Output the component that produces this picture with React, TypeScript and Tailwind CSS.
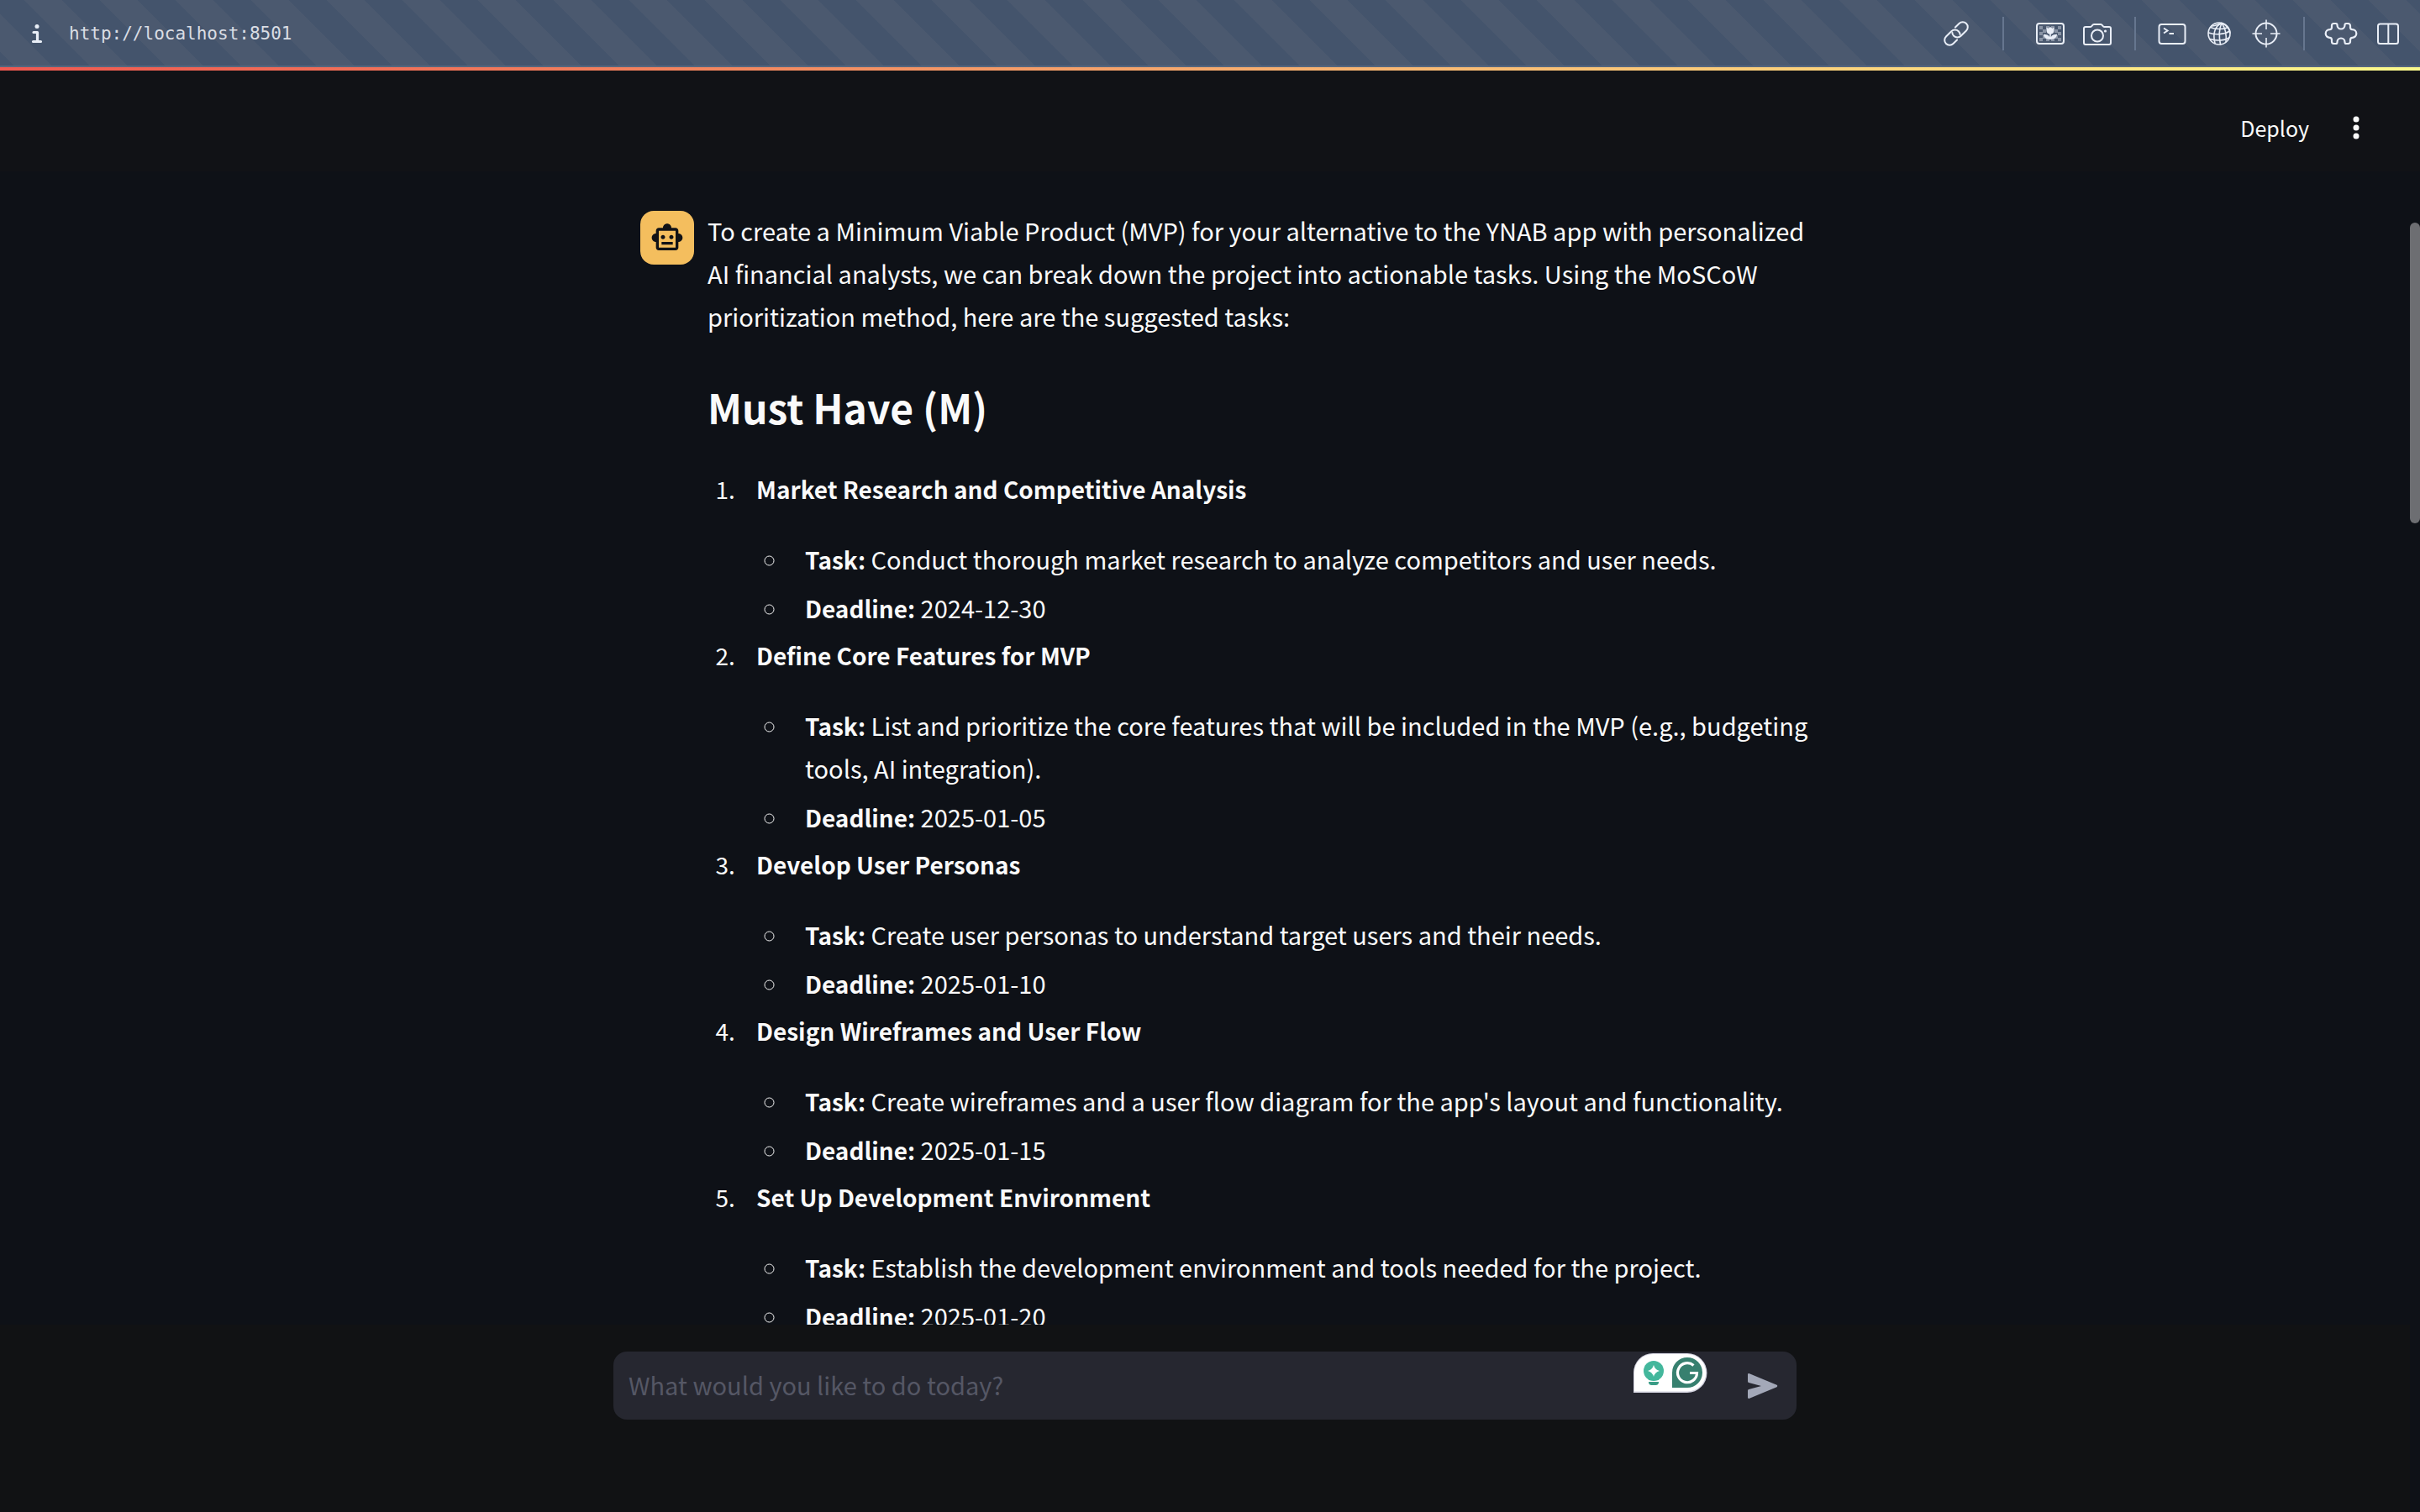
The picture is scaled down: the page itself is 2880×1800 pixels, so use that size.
import type { ReactNode } from "react";

const goals = [
  {
    title: "Market Research and Competitive Analysis",
    task: "Conduct thorough market research to analyze competitors and user needs.",
    deadline: "2024-12-30",
  },
  {
    title: "Define Core Features for MVP",
    task: "List and prioritize the core features that will be included in the MVP (e.g., budgeting tools, AI integration).",
    deadline: "2025-01-05",
  },
  {
    title: "Develop User Personas",
    task: "Create user personas to understand target users and their needs.",
    deadline: "2025-01-10",
  },
  {
    title: "Design Wireframes and User Flow",
    task: "Create wireframes and a user flow diagram for the app's layout and functionality.",
    deadline: "2025-01-15",
  },
  {
    title: "Set Up Development Environment",
    task: "Establish the development environment and tools needed for the project.",
    deadline: "2025-01-20",
  },
];

function BarButton({ label, children }: { label: string; children: ReactNode }) {
  return (
    <button type="button" aria-label={label} className="flex size-10 items-center justify-center">
      {children}
    </button>
  );
}

const stroke = {
  fill: "none",
  stroke: "currentColor",
  strokeWidth: 2,
  strokeLinecap: "round",
  strokeLinejoin: "round",
} as const;

function Divider() {
  return <div className="mr-[23px] ml-6 h-10 w-0.5 bg-[#66768f]" />;
}

function LinkIcon() {
  return (
    <svg viewBox="0 0 40 40" className="size-10" {...stroke}>
      <g transform="rotate(-45 20 20)">
        <path d="M15.500 26H9A6 6 0 0 1 9 14H18A6 6 0 0 1 24 20C24 21.500 23.500 23 22.500 24" />
        <path d="M24.500 14H31A6 6 0 0 1 31 26H22A6 6 0 0 1 16 20C16 18.500 16.500 17 17.500 16" />
      </g>
    </svg>
  );
}

function ImageIcon() {
  const cells: [number, number][] = [
    [7, 11], [15, 11], [21, 11], [29, 11], [11, 15], [25, 15], [7, 18], [29, 18],
    [11, 22], [25, 22], [7, 25], [15, 25], [21, 25], [29, 25],
  ];
  return (
    <svg viewBox="0 0 40 40" className="size-10" {...stroke}>
      <rect x="4" y="8" width="32" height="24" rx="3" />
      <g fill="currentColor" stroke="none" opacity="0.4">
        {cells.map(([x, y]) => (
          <rect key={`${x}-${y}`} x={x} y={y} width="4" height="4" />
        ))}
      </g>
      <g fill="currentColor" stroke="none">
        <path d="M15.5 12.5L17.5 14L20 12L22.5 14L24.5 12.5V16.5C24.5 19 22.5 20.5 20.8 20.8V24C22 22 24.5 20.8 28 20.8C28 24.5 25 27 20 27C15 27 12 24.5 12 20.8C15.5 20.8 18 22 19.2 24V20.8C17.5 20.5 15.5 19 15.5 16.5Z" />
      </g>
    </svg>
  );
}

function CameraIcon() {
  return (
    <svg viewBox="0 0 40 40" className="size-10" {...stroke}>
      <path d="M6 12H12C13.5 12 14 9 16 9H24C26 9 26.500 12 28 12H34A2 2 0 0 1 36 14V31A2 2 0 0 1 34 33H6A2 2 0 0 1 4 31V14A2 2 0 0 1 6 12Z" />
      <circle cx="20" cy="22.500" r="7" />
      <circle cx="29.500" cy="17" r="1.600" fill="currentColor" stroke="none" />
    </svg>
  );
}

function TerminalIcon() {
  return (
    <svg viewBox="0 0 40 40" className="size-10" {...stroke}>
      <rect x="4.500" y="9" width="31" height="23" rx="3" />
      <path d="M10 13.500L14.500 16.500L10 19.500M16.500 20H22" strokeLinecap="butt" strokeLinejoin="miter" />
    </svg>
  );
}

function GlobeIcon() {
  return (
    <svg viewBox="0 0 40 40" className="size-10" {...stroke} strokeWidth={1.6}>
      <circle cx="20" cy="20" r="13" />
      <path d="M23 7.500C15 11 12 20 15 31.500M23 7.500C20 14 19.500 23 21.500 33M23 7.500C27 13 29 21 28 30M23 7.500C29 10 32 15 33 19" />
      <path d="M9.500 12.500C15 15 25 15.500 30.500 12.500M7.500 19C14 21.500 26 21.500 32.500 17M9.500 26.500C15 28.500 26 29 31.500 25M11 11C15 11.500 18 9 23 7.500" />
    </svg>
  );
}

function CrosshairIcon() {
  return (
    <svg viewBox="0 0 40 40" className="size-10" {...stroke} strokeLinecap="butt">
      <circle cx="20" cy="20" r="12.500" />
      <path d="M20 3.500V15M20 25V36.500M3.500 20H15M25 20H36.500" strokeWidth={1.6} />
    </svg>
  );
}

function PuzzleIcon() {
  return (
    <svg viewBox="0 0 40 40" className="size-10" {...stroke} strokeWidth={2.2}>
      <path d="M14 8H11.500A2.500 2.500 0 0 0 9 10.500V12.500Q9 15 6.500 15.200A4.800 4.800 0 0 0 6.500 24.800Q9 25 9 27.500V29.500A2.500 2.500 0 0 0 11.500 32H14Q15.500 32 15.500 30A4.500 4.500 0 0 1 24.500 30Q24.500 32 26 32H28.500A2.500 2.500 0 0 0 31 29.500V27.500Q31 25 33.500 24.800A4.800 4.800 0 0 0 33.500 15.200Q31 15 31 12.500V10.500A2.500 2.500 0 0 0 28.500 8H26Q24.500 8 24.500 10A4.500 4.500 0 0 1 15.500 10Q15.500 8 14 8Z" />
    </svg>
  );
}

function PanelsIcon() {
  return (
    <svg viewBox="0 0 40 40" className="size-10" {...stroke}>
      <rect x="8" y="8.500" width="24" height="23.500" rx="2.500" />
      <path d="M20.300 9V32" />
    </svg>
  );
}

function BrowserBar() {
  return (
    <div className="shrink-0">
      <div className="flex h-20 items-center border-b-2 border-[#56667d] bg-[#44546c] bg-[linear-gradient(45deg,#44546c_25%,#4b596f_25%_50%,#44546c_50%_75%,#4b596f_75%)] bg-[length:90px_90px] bg-[position:74px_0px] pt-0.5 pr-[18px] pl-6 text-[#e9eef7]">
        <button type="button" aria-label="Site information" className="flex size-10 items-center justify-center">
          <svg viewBox="0 0 40 40" className="size-10" fill="none" stroke="currentColor" strokeWidth="3.200" strokeLinecap="round" strokeLinejoin="round">
            <circle cx="20" cy="11.500" r="2.500" fill="currentColor" stroke="none" />
            <path d="M16 18.500H20.500V29.500M15.500 29.500H24.500" />
          </svg>
        </button>
        <a href="http://localhost:8501" className="ml-[18px] font-['DejaVu_Sans_Mono',monospace] text-[21px] leading-8 text-[#d9dde4]">
          http://localhost:8501
        </a>
        <nav aria-label="Page tools" className="ml-auto flex items-center">
          <BarButton label="Copy link"><LinkIcon /></BarButton>
          <div className="mx-[35px] h-10 w-0.5 bg-[#66768f]" />
          <div className="flex gap-4">
            <BarButton label="Images"><ImageIcon /></BarButton>
            <BarButton label="Capture"><CameraIcon /></BarButton>
          </div>
          <Divider />
          <div className="flex gap-4">
            <BarButton label="Console"><TerminalIcon /></BarButton>
            <BarButton label="Network"><GlobeIcon /></BarButton>
            <BarButton label="Inspect"><CrosshairIcon /></BarButton>
          </div>
          <Divider />
          <div className="flex gap-4">
            <BarButton label="Extensions"><PuzzleIcon /></BarButton>
            <BarButton label="Split view"><PanelsIcon /></BarButton>
          </div>
        </nav>
      </div>
      <div className="h-1 bg-[linear-gradient(90deg,#f05850,#f3875f_30%,#f8b873_58%,#fdd37c_76%,#ffe884_88%,#fbf98c)]" />
    </div>
  );
}

function RobotIcon() {
  return (
    <svg viewBox="0 0 24 24" className="size-10" fill="#111216">
      <path d="M20 9V7c0-1.100-.9-2-2-2h-3c0-1.660-1.340-3-3-3S9 3.340 9 5H6c-1.100 0-2 .9-2 2v2c-1.660 0-3 1.340-3 3s1.340 3 3 3v4c0 1.100.9 2 2 2h12c1.100 0 2-.9 2-2v-4c1.660 0 3-1.340 3-3s-1.340-3-3-3zm-2 10H6V7h12v12zm-9-6c-.83 0-1.500-.67-1.500-1.500S8.170 10 9 10s1.500.67 1.500 1.500S9.830 13 9 13zm7.500-1.500c0 .83-.67 1.500-1.500 1.500s-1.500-.67-1.500-1.500.67-1.500 1.500-1.500 1.500.67 1.500 1.500zM8 15h8v2H8v-2z" />
    </svg>
  );
}

function WritingAssistant() {
  return (
    <svg viewBox="0 0 88 47" className="h-[47px] w-[88px]" role="img" aria-label="Writing assistant">
      <path d="M0 47V23A23 23 0 0 1 23 0H64A23.500 23.500 0 0 1 64 47Z" fill="#d3d3df" />
      <path d="M1 45.500V23A22 22 0 0 1 23 1H64A22 22 0 0 1 64 45.500Z" fill="#ffffff" />
      <circle cx="24" cy="21" r="12" fill="#43b79c" />
      <path d="M17 28H31L30 32H18Z" fill="#43b79c" />
      <path d="M18 34H30V35A3.500 3.500 0 0 1 26.500 38H21.500A3.500 3.500 0 0 1 18 35Z" fill="#3a9c86" />
      <path d="M24 14Q25.500 19.500 31 21Q25.500 22.500 24 28Q22.500 22.500 17 21Q22.500 19.500 24 14Z" fill="#ffffff" />
      <path d="M46 41V23A18 18 0 1 1 64 41Z" fill="#37806f" />
      <path d="M71.500 14.500A11.500 11.500 0 1 0 75.500 23.500H67" fill="none" stroke="#ffffff" strokeWidth="3.200" />
    </svg>
  );
}

export default function App() {
  return (
    <div className="flex h-screen flex-col overflow-hidden bg-[#0e1117] font-['Noto_Sans_CJK_SC',sans-serif] text-[#fafafa]">
      <BrowserBar />
      <div className="relative flex min-h-0 flex-1 flex-col">
        <header className="flex h-[120px] shrink-0 items-center justify-end gap-9 bg-[#111216] pt-4 pr-14">
          <button type="button" className="text-[25px] leading-10">Deploy</button>
          <button type="button" aria-label="Main menu" className="flex size-10 items-center justify-center">
            <svg viewBox="0 0 40 40" className="size-10" fill="currentColor">
              <circle cx="20" cy="10" r="3.500" />
              <circle cx="20" cy="20" r="3.500" />
              <circle cx="20" cy="30" r="3.500" />
            </svg>
          </button>
        </header>
        <main className="min-h-0 flex-1 overflow-hidden pr-3">
          <article className="mx-auto flex w-full max-w-[1408px] items-start gap-4 pt-[45px] pl-8 text-[29px] leading-[51px]">
            <div className="mt-0.5 flex size-16 shrink-0 items-center justify-center rounded-2xl bg-[#f4be5e]">
              <RobotIcon />
            </div>
            <div className="-mr-6 min-w-0 flex-1">
              <p>
                To create a Minimum Viable Product (MVP) for your alternative to the YNAB app with personalized
                AI financial analysts, we can break down the project into actionable tasks. Using the MoSCoW
                prioritization method, here are the suggested tasks:
              </p>
              <h3 className="mt-[52px] mb-[42px] text-[48px] leading-[61px] font-semibold">Must Have (M)</h3>
              <ol className="flex list-decimal flex-col gap-1.5 pl-[39px]">
                {goals.map((goal) => (
                  <li key={goal.title} className="pl-[19px] text-[28px] leading-[51px]">
                    <p className="font-semibold">{goal.title}</p>
                    <ul className="mt-8 flex list-[circle] flex-col gap-[7px] pl-[39px] text-[29px] leading-[51px]">
                      <li className="pl-[19px]">
                        <strong className="text-[28px] leading-10 font-semibold">Task:</strong> {goal.task}
                      </li>
                      <li className="pl-[19px]">
                        <strong className="text-[28px] leading-10 font-semibold">Deadline:</strong> {goal.deadline}
                      </li>
                    </ul>
                  </li>
                ))}
              </ol>
            </div>
          </article>
        </main>
        <footer className="mr-3 shrink-0 bg-[#111214] pt-8 pb-[110px]">
          <form className="relative mx-auto flex h-[81px] w-full max-w-[1408px] items-center rounded-2xl bg-[#262730]">
            <input
              type="text"
              aria-label="Message"
              placeholder="What would you like to do today?"
              className="h-full min-w-0 flex-1 rounded-2xl bg-transparent pb-1 pl-[18px] text-[29px] leading-10 outline-none placeholder:text-[#555765]"
            />
            <button type="submit" aria-label="Send message" className="flex h-full w-20 items-center justify-center text-[#a3a8b8]">
              <svg viewBox="0 0 36 30" className="h-[30px] w-9" fill="currentColor">
                <path d="M0 1.500Q0 -.5 2 .3L34.500 13.800Q36 15 34.500 16.200L2 29.700Q0 30.500 0 28.500V20.500Q0 19.300 1.200 19L16 15L1.200 11Q0 10.700 0 9.500Z" />
              </svg>
            </button>
            <div className="absolute top-0.5 right-[106px]">
              <WritingAssistant />
            </div>
          </form>
        </footer>
        <div className="absolute top-[181px] right-0 h-[358px] w-3 rounded-full bg-[#6d6e72]" />
      </div>
    </div>
  );
}
